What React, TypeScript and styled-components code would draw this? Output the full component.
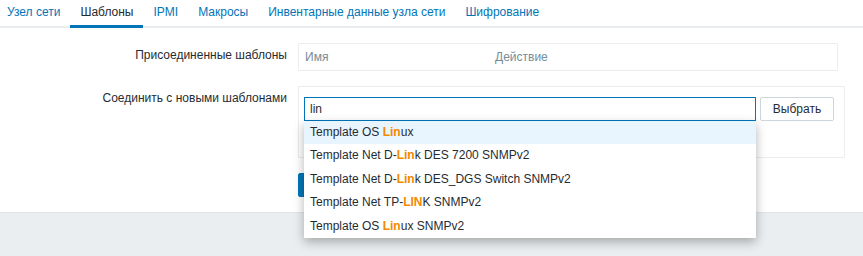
import { createGlobalStyle, styled } from 'styled-components';

const GlobalStyle = createGlobalStyle`
  html, body {
    margin: 0;
    padding: 0;
    background-color: #ebeef0;
    font-family: 'Liberation Sans', Arial, sans-serif;
    font-size: 12px;
    color: #1f2c33;
  }
`;

const tabs = ['Узел сети', 'Шаблоны', 'IPMI', 'Макросы', 'Инвентарные данные узла сети', 'Шифрование'];

const suggestions: [string, string, string][] = [
  ['Template OS ', 'Lin', 'ux'],
  ['Template Net D-', 'Lin', 'k DES 7200 SNMPv2'],
  ['Template Net D-', 'Lin', 'k DES_DGS Switch SNMPv2'],
  ['Template Net TP-', 'LIN', 'K SNMPv2'],
  ['Template OS ', 'Lin', 'ux SNMPv2'],
];

const App = () => {
  return (
    <>
      <GlobalStyle />
      <Page>
        <TabBar>
          {tabs.map((tab) => (
            <Tab key={tab} $active={tab === 'Шаблоны'}>
              {tab}
            </Tab>
          ))}
        </TabBar>

        <FormGrid>
          <Label>Присоединенные шаблоны</Label>
          <Box $width={540}>
            <TableHead>
              <HeadCell>Имя</HeadCell>
              <HeadCell>Действие</HeadCell>
            </TableHead>
          </Box>

          <Label>Соединить с новыми шаблонами</Label>
          <Box $width={547}>
            <LinkRow>
              <InputWrap>
                <SearchInput>lin</SearchInput>
                <Suggest>
                  {suggestions.map(([before, found, after], i) => (
                    <SuggestItem key={i} $hover={i === 0}>
                      {before}
                      <Found>{found}</Found>
                      {after}
                    </SuggestItem>
                  ))}
                </Suggest>
              </InputWrap>
              <SelectButton>Выбрать</SelectButton>
            </LinkRow>
          </Box>

          <span />
          <Buttons>
            {/* submit button, covered by the suggest list */}
            <SubmitButton aria-label='Обновить' />
          </Buttons>
        </FormGrid>
      </Page>
      <Footer />
    </>
  );
};

export default App;

const Page = styled.div`
  position: relative;
  z-index: 1;
  background-color: #ffffff;
  border-bottom: 1px solid #dfe4e7;
`;

const Footer = styled.div`
  height: 42px;
  background-color: #ebeef0;
`;

const TabBar = styled.ul`
  display: flex;
  margin: 0 0 0 -3px;
  padding: 0;
  list-style: none;
  height: 26px;
  border-bottom: 2px solid #ebeef0;
`;

const Tab = styled.li<{ $active?: boolean }>`
  padding: 5px 10px 6px;
  line-height: 14px;
  height: 14px;
  border-bottom: 3px solid ${(p) => (p.$active ? '#0275b8' : 'transparent')};
  color: ${(p) => (p.$active ? '#1f2c33' : '#0275b8')};
  white-space: nowrap;
`;

const FormGrid = styled.div`
  display: grid;
  grid-template-columns: 287px 1fr;
  column-gap: 11px;
  row-gap: 15px;
  padding: 15px 0 15px;
`;

const Label = styled.div`
  text-align: right;
  padding-top: 5px;
  line-height: 14px;
  color: #1f2c33;
`;

const Box = styled.div<{ $width: number }>`
  width: ${(p) => p.$width}px;
  box-sizing: border-box;
  border: 1px solid #ebeef0;
`;

const TableHead = styled.div`
  display: grid;
  grid-template-columns: 190px 1fr;
  height: 26px;
  align-items: center;
`;

const HeadCell = styled.div`
  padding: 0 6px;
  color: #768d99;
`;

const LinkRow = styled.div`
  display: flex;
  gap: 4px;
  padding: 10px 10px 36px 5px;
`;

const InputWrap = styled.div`
  position: relative;
  width: 452px;
`;

const SearchInput = styled.div`
  box-sizing: border-box;
  height: 24px;
  line-height: 22px;
  padding: 0 5px;
  border: 1px solid #0275b8;
  background: #ffffff;
  color: #1f2c33;
`;

const Suggest = styled.ul`
  position: absolute;
  top: 100%;
  left: 0;
  right: 0;
  margin: 0;
  padding: 0;
  list-style: none;
  background: #ffffff;
  box-shadow: 0 4px 10px rgba(0, 0, 0, 0.3);
  z-index: 10;
`;

const SuggestItem = styled.li<{ $hover?: boolean }>`
  padding: 4px 6px;
  line-height: 15.4px;
  white-space: nowrap;
  background: ${(p) => (p.$hover ? '#e8f5ff' : '#ffffff')};
  color: #1f2c33;
`;

const Found = styled.span`
  font-weight: bold;
  color: #f48800;
`;

const SelectButton = styled.div`
  box-sizing: border-box;
  width: 74px;
  height: 24px;
  line-height: 22px;
  text-align: center;
  border: 1px solid #ccd5d9;
  border-radius: 2px;
  background: #ffffff;
  color: #1f2c33;
`;

const Buttons = styled.div`
  display: flex;
  gap: 10px;
`;

const SubmitButton = styled.div`
  box-sizing: border-box;
  width: 80px;
  height: 24px;
  border: 1px solid #0275b8;
  border-radius: 2px;
  background: #0275b8;
`;
